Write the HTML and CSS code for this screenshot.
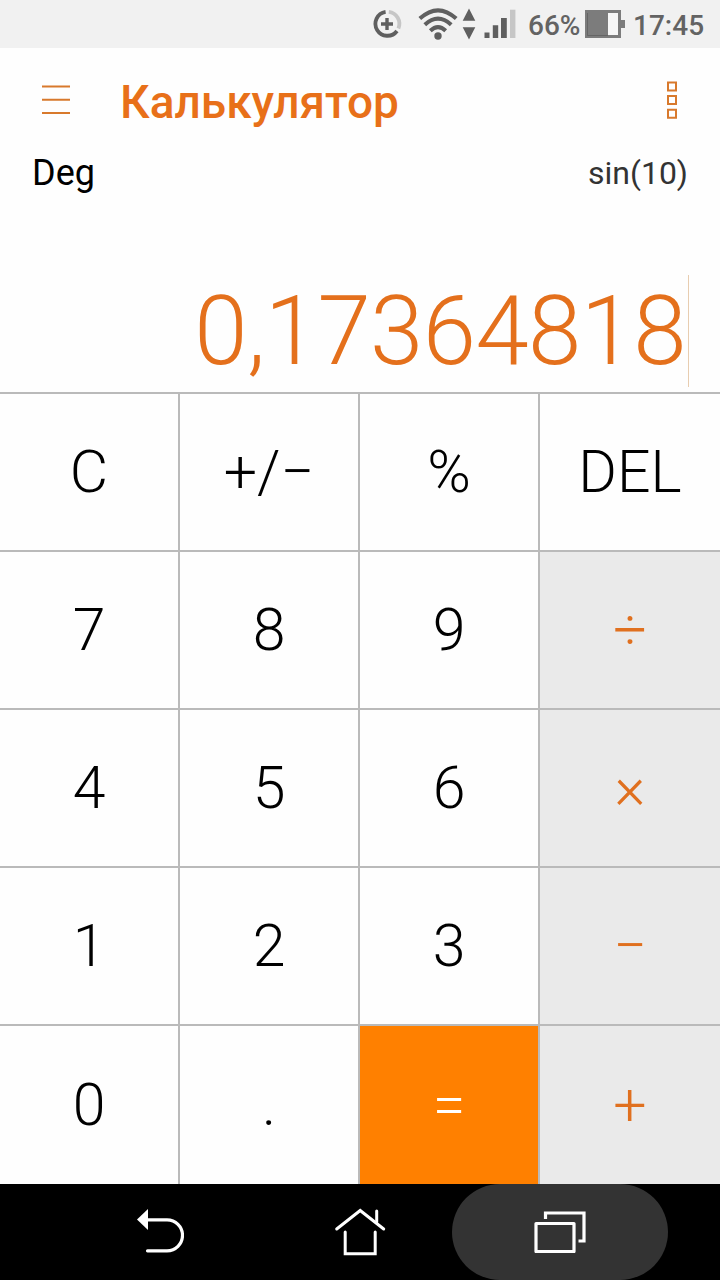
FILE: index.html
```html
<!DOCTYPE html>
<html lang="ru">

<head>
    <meta charset="utf-8">
    <meta name="viewport" content="width=device-width, initial-scale=1">
    <title>Калькулятор</title>
    <link rel="stylesheet" href="styles.css">
</head>

<body>
    <div class="phone">
        <div class="status">
            <svg class="status-icons" width="150" height="48" viewBox="370 0 150 48">
                <!-- data saver -->
                <path d="M385.6 11.9A12 12 0 1 0 397 31" fill="none" stroke="#5f5f5f" stroke-width="3.8" />
                <path d="M388.8 11.9A12 12 0 0 1 398.4 28.5" fill="none" stroke="#c6c6c6" stroke-width="3.8" />
                <path d="M387 18v12M381 24h12" fill="none" stroke="#5f5f5f" stroke-width="3.4" />
                <!-- wifi -->
                <g fill="none" stroke="#5f5f5f" stroke-width="4">
                    <path d="M419.8 18.6Q438 2 456.2 18.6" />
                    <path d="M424.8 24.8Q438 12.6 451.2 24.8" />
                    <path d="M430.3 30.7Q438 23.4 445.7 30.7" />
                </g>
                <circle cx="438" cy="36" r="3.7" fill="#5f5f5f" />
                <path d="M469 8.5l6.3 12.3h-12.6zM469 39.5l6.3-12.3h-12.6z" fill="#5f5f5f" />
                <!-- signal -->
                <path d="M484.5 32.5h5v5.5h-5zM492.8 25.3h5.4V38h-5.4zM501 18h5.8v20H501z" fill="#5f5f5f" />
                <path d="M510 9.7h5.4V38H510z" fill="#c6c6c6" />
            </svg>
            <span class="percent">66%</span>
            <svg class="battery" width="40" height="28" viewBox="0 0 40 28">
                <path d="M0 0h36v10h4v8h-4v10H0z" fill="#7c7c7c" />
                <path d="M23 3h10v22H23z" fill="#f6f6f6" />
                <path d="M2.5 3v22.5H23" fill="none" stroke="#555" stroke-width=".6" />
            </svg>
            <span class="time">17:45</span>
        </div>

        <div class="header">
            <svg class="menu" width="28" height="32" viewBox="0 0 28 32">
                <path d="M0 2.5h28M0 15.8h28M0 29h28" fill="none" stroke="#d8792c" stroke-width="2" />
            </svg>
            <h1>Калькулятор</h1>
            <svg class="more" width="10" height="38" viewBox="0 0 10 38">
                <path d="M1 1.5h8v8H1zM1 15h8v8H1zM1 28.8h8v8H1z" fill="none" stroke="#d8792c" stroke-width="2" />
            </svg>
        </div>

        <div class="display">
            <div class="expression">
                <span class="mode">Deg</span>
                <span class="formula">sin(10)</span>
            </div>
            <div class="result">0,17364818</div>
        </div>

        <div class="keys">
            <button type="button">C</button>
            <button type="button">+/−</button>
            <button type="button">%</button>
            <button type="button">DEL</button>
            <button type="button">7</button>
            <button type="button">8</button>
            <button type="button">9</button>
            <button type="button" class="op">÷</button>
            <button type="button">4</button>
            <button type="button">5</button>
            <button type="button">6</button>
            <button type="button" class="op">×</button>
            <button type="button">1</button>
            <button type="button">2</button>
            <button type="button">3</button>
            <button type="button" class="op">−</button>
            <button type="button">0</button>
            <button type="button">.</button>
            <button type="button" class="equals">=</button>
            <button type="button" class="op">+</button>
        </div>

        <div class="navbar">
            <div class="nav-item">
                <svg width="48" height="48" viewBox="-1 -1 48 48">
                    <path d="M11 0v21L0 10.5z" fill="#fff" />
                    <path d="M11 10.8h19a15.4 15.4 0 0 1 0 31H10.5" fill="none" stroke="#fff" stroke-width="3.2" stroke-linecap="round" />
                </svg>
            </div>
            <div class="nav-item home">
                <svg width="52" height="50" viewBox="-0.7 0 52 50">
                    <g fill="none" stroke="#fff" stroke-width="3" stroke-linecap="round">
                        <path d="M2 22L25.5 3.5 49 22" />
                        <path d="M42 4v11" />
                        <path d="M10.5 25v21.8h30V25" />
                    </g>
                </svg>
            </div>
            <div class="nav-item active">
                <svg width="52" height="42" viewBox="-0.5 0 52 42">
                    <g fill="none" stroke="#fff" stroke-width="3.2" stroke-linejoin="round">
                        <path d="M1.5 12.5h38v28h-38z" />
                        <path d="M11 8V2h38.5v28H44" stroke-linejoin="miter" />
                    </g>
                </svg>
            </div>
        </div>
    </div>
</body>

</html>
```
FILE: styles.css
```css
body {
    margin: 0;
    background-color: #fefefe;
    font-family: Roboto, "Open Sans", sans-serif;
}

.phone {
    display: flex;
    flex-direction: column;
    width: 720px;
    height: 1280px;
    overflow: hidden;
}

.status {
    display: flex;
    align-items: center;
    height: 48px;
    padding-left: 370px;
    background-color: #f1f1f1;
    color: #636363;
    font-size: 28px;
    font-weight: 500;
}

.percent {
    width: 57px;
    margin-left: 8px;
    padding-top: 3px;
}

.time {
    margin-left: 8px;
    padding-top: 3px;
}

.header {
    display: flex;
    align-items: center;
    height: 104px;
    padding: 0 43px 0 42px;
    color: #e87019;
}

.header h1 {
    flex: 1;
    margin: 4px 0 0 50px;
    font-size: 46px;
    font-weight: 500;
}

.display {
    height: 240px;
}

.expression {
    display: flex;
    justify-content: space-between;
    padding: 0 32px;
    line-height: 42px;
    height: 123px;
}

.mode {
    font-size: 36px;
    color: #000;
}

.formula {
    font-size: 32px;
    color: #333;
}

.result {
    width: max-content;
    margin: 0 31px 0 auto;
    padding-right: 2px;
    height: 112px;
    line-height: 112px;
    border-right: 1px solid #e8cdb0;
    color: #e4701c;
    font-size: 96px;
    font-weight: 300;
    letter-spacing: -0.6px;
}

.keys {
    display: grid;
    grid-template-columns: 178px 178px 178px 180px;
    grid-template-rows: repeat(4, 156px) 158px;
    gap: 2px;
    padding-top: 2px;
    background-color: #bababa;
}

.keys button {
    border: 0;
    padding: 0 0 2px;
    background-color: #fefefe;
    color: #000;
    font-family: inherit;
    font-size: 59px;
    font-weight: 300;
}

.keys .op {
    background-color: #eaeaea;
    color: #e0701f;
}

.keys .equals {
    background-color: #ff8000;
    color: #fff;
}

.navbar {
    display: flex;
    align-items: center;
    height: 96px;
    padding-left: 52px;
    background-color: #000;
}

.nav-item {
    display: flex;
    align-items: center;
    justify-content: center;
    width: 216px;
    height: 96px;
}

.nav-item.home {
    width: 184px;
}

.nav-item.active {
    border-radius: 48px;
    background-color: #333;
}
```
